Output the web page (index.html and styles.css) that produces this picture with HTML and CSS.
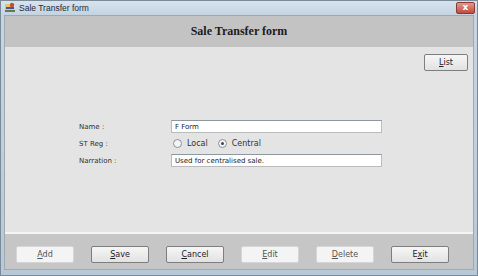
FILE: index.html
```html
<!DOCTYPE html>
<html lang="en">
<head>
  <meta charset="UTF-8">
  <title>Sale Transfer form</title>
  <link rel="stylesheet" href="styles.css">
</head>
<body>

  <div class="window">
    <div class="titlebar">
      <svg class="appicon" width="12" height="12" viewBox="0 0 12 12">
        <rect x="1" y="2" width="9" height="8" fill="#e8c65a"/>
        <rect x="2" y="5" width="8" height="2" fill="#3a5aa8"/>
        <circle cx="8" cy="3" r="2.2" fill="#c94a3a"/>
        <rect x="1" y="8" width="10" height="2" fill="#6a7a40"/>
      </svg>
      <span class="wintitle">Sale Transfer form</span>
      <span class="close">x</span>
    </div>

    <div class="client">
      <div class="header">Sale Transfer form</div>

      <div class="formarea">
        <div class="toprow">
          <button class="btn"><u>L</u>ist</button>
        </div>

        <div class="fields">
          <div class="row">
            <label>Name :</label>
            <input type="text" value="F Form">
          </div>
          <div class="row">
            <label>ST Reg :</label>
            <div class="radios">
              <span class="radio"><span class="dot"></span>Local</span>
              <span class="radio checked"><span class="dot"></span>Central</span>
            </div>
          </div>
          <div class="row">
            <label>Narration :</label>
            <input type="text" value="Used for centralised sale.">
          </div>
        </div>
      </div>

      <div class="buttonbar">
        <button class="btn flat"><u>A</u>dd</button>
        <button class="btn"><u>S</u>ave</button>
        <button class="btn"><u>C</u>ancel</button>
        <button class="btn flat"><u>E</u>dit</button>
        <button class="btn flat"><u>D</u>elete</button>
        <button class="btn">E<u>x</u>it</button>
      </div>
    </div>
  </div>

</body>
</html>
```

FILE: styles.css
```css
body {
  margin: 0;
  font-family: "DejaVu Sans", sans-serif;
  background: #ffffff;
}
.window {
  width: 478px;
  height: 276px;
  background: linear-gradient(#c6d6e4, #b7c9d8);
  display: flex;
  flex-direction: column;
  box-sizing: border-box;
  border: 1px solid #7b8a98;
}
.titlebar {
  height: 14px;
  display: flex;
  align-items: center;
  padding-left: 3px;
  background: linear-gradient(#d7e4ef, #c3d3e1);
}
.appicon {
  margin-right: 3px;
}
.wintitle {
  font-family: "Liberation Sans", sans-serif;
  font-size: 8.5px;
  color: #1e2a3a;
}
.close {
  margin-left: auto;
  margin-right: 2px;
  width: 17px;
  height: 10px;
  line-height: 9px;
  text-align: center;
  font-size: 9px;
  font-weight: bold;
  color: #ffffff;
  background: linear-gradient(#e09a90, #c24a3c);
  border: 1px solid #8a3a34;
  border-radius: 2px;
}
.client {
  flex: 1;
  margin: 0 3px 5px 3px;
  display: flex;
  flex-direction: column;
  border: 1px solid #a0a8b0;
  background: #c6c6c6;
}
.header {
  height: 31px;
  line-height: 31px;
  text-align: center;
  font-family: "Liberation Serif", serif;
  font-weight: bold;
  font-size: 12px;
  color: #1c1c1c;
  background: #c3c3c3;
}
.formarea {
  height: 185px;
  background: #e4e4e4;
  border-bottom: 2px solid #f4f4f4;
}
.toprow {
  display: flex;
  justify-content: flex-end;
  padding: 7px 5px 0 0;
}
.fields {
  margin: 47px 0 0 74px;
}
.row {
  display: flex;
  align-items: center;
  height: 17px;
}
label {
  width: 92px;
  font-family: "DejaVu Sans", sans-serif;
  font-size: 7px;
  color: #303030;
}
input {
  width: 211px;
  height: 13px;
  box-sizing: border-box;
  padding: 0 3px;
  font-family: "DejaVu Sans", sans-serif;
  font-size: 7px;
  color: #222;
  background: #ffffff;
  border: 1px solid #b8bcc0;
  border-top-color: #8e969e;
}
.radios {
  display: flex;
  gap: 10px;
  padding-left: 2px;
}
.radio {
  display: flex;
  align-items: center;
  font-family: "DejaVu Sans", sans-serif;
  font-size: 8px;
  color: #333;
}
.dot {
  width: 7px;
  height: 7px;
  border: 1px solid #8c9096;
  border-radius: 50%;
  background: #f4f4f4;
  margin-right: 5px;
  position: relative;
}
.checked .dot::after {
  content: "";
  position: absolute;
  left: 2px;
  top: 2px;
  width: 3px;
  height: 3px;
  border-radius: 50%;
  background: #2c4a6c;
}
.buttonbar {
  flex: 1;
  display: flex;
  align-items: center;
  gap: 17px;
  padding: 5px 0 0 11px;
  background: #c6c6c6;
}
.btn {
  width: 58px;
  height: 17px;
  padding: 0;
  font-family: "DejaVu Sans", sans-serif;
  font-size: 8px;
  color: #222;
  background: linear-gradient(#f6f6f6, #e2e2e2);
  border: 1px solid #7e7e7e;
  border-radius: 2px;
}
.btn.flat {
  background: #f4f4f4;
  border-color: #d6d6d6;
  color: #555;
}
.toprow .btn {
  width: 44px;
}
```
